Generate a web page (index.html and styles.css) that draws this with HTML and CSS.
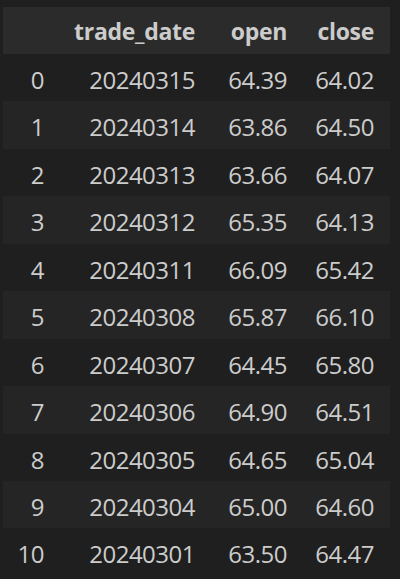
FILE: index.html
```html
<!DOCTYPE html>
<html>
<head>
<meta charset="utf-8">
<link rel="stylesheet" href="styles.css">
</head>
<body>
<table class="df">
  <colgroup>
    <col class="c-idx"><col class="c-date"><col class="c-open"><col class="c-close">
  </colgroup>
  <thead>
    <tr><th></th><th>trade_date</th><th>open</th><th>close</th></tr>
  </thead>
  <tbody>
    <tr><th>0</th><td>20240315</td><td>64.39</td><td>64.02</td></tr>
    <tr><th>1</th><td>20240314</td><td>63.86</td><td>64.50</td></tr>
    <tr><th>2</th><td>20240313</td><td>63.66</td><td>64.07</td></tr>
    <tr><th>3</th><td>20240312</td><td>65.35</td><td>64.13</td></tr>
    <tr><th>4</th><td>20240311</td><td>66.09</td><td>65.42</td></tr>
    <tr><th>5</th><td>20240308</td><td>65.87</td><td>66.10</td></tr>
    <tr><th>6</th><td>20240307</td><td>64.45</td><td>65.80</td></tr>
    <tr><th>7</th><td>20240306</td><td>64.90</td><td>64.51</td></tr>
    <tr><th>8</th><td>20240305</td><td>64.65</td><td>65.04</td></tr>
    <tr><th>9</th><td>20240304</td><td>65.00</td><td>64.60</td></tr>
    <tr><th>10</th><td>20240301</td><td>63.50</td><td>64.47</td></tr>
  </tbody>
</table>
</body>
</html>
```
FILE: styles.css
```css
html, body {
  margin: 0;
  padding: 0;
  background: #1f1f1f;
}
body {
  padding: 7px 0 0 3px;
  font-family: "Open Sans", "Noto Sans", sans-serif;
  font-size: 24px;
  letter-spacing: -0.5px;
  color: #cccccc;
}
.df {
  border-collapse: collapse;
  border-spacing: 0;
  table-layout: fixed;
  width: 387px;
}
.c-idx { width: 57px; }
.c-date { width: 151px; }
.c-open { width: 92px; }
.c-close { width: 87px; }
.df th, .df td {
  text-align: right;
  padding: 10px 16px 0 0;
  height: 37.45px;
  line-height: 31px;
  vertical-align: top;
  white-space: nowrap;
  box-sizing: content-box;
}
.df tbody th {
  font-weight: 400;
}
.df thead th {
  font-weight: 700;
  font-size: 23px;
  letter-spacing: -0.3px;
  background: #2b2b2b;
  padding-top: 9px;
  height: 38px;
}
.df tbody tr:nth-child(even) {
  background: #252525;
}
```
